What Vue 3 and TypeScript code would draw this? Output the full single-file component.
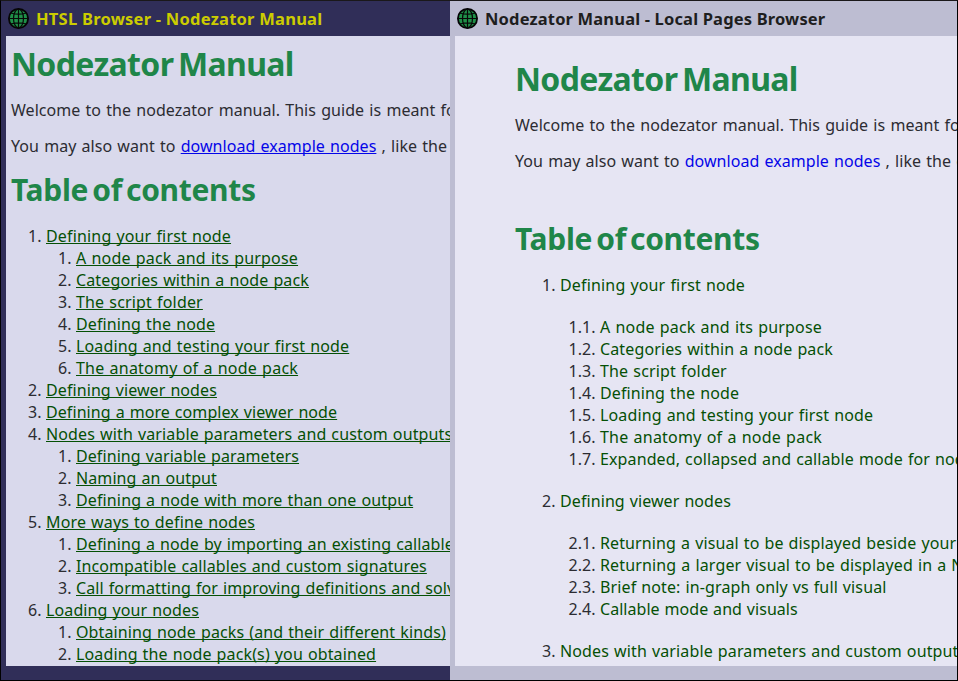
<script setup lang="ts">
interface Entry {
  num: string
  text: string
  /** Extra line width in pixels, spread over the letters. */
  adj?: number
  children?: Entry[]
}

const baseSpacing = 0.15

function tracking(e: Entry) {
  return { letterSpacing: `${(baseSpacing + (e.adj ?? 0) / e.text.length).toFixed(3)}px` }
}

const compactToc: Entry[] = [
  {
    num: '1.', text: 'Defining your first node', adj: 0.3, children: [
      { num: '1.', text: 'A node pack and its purpose', adj: 1.2 },
      { num: '2.', text: 'Categories within a node pack', adj: -0.5 },
      { num: '3.', text: 'The script folder', adj: 0.3 },
      { num: '4.', text: 'Defining the node', adj: -0.4 },
      { num: '5.', text: 'Loading and testing your first node', adj: -0.3 },
      { num: '6.', text: 'The anatomy of a node pack', adj: 2 },
    ],
  },
  { num: '2.', text: 'Defining viewer nodes', adj: -1.3 },
  { num: '3.', text: 'Defining a more complex viewer node', adj: -2.5 },
  {
    num: '4.', text: 'Nodes with variable parameters and custom outputs', adj: -0.8, children: [
      { num: '1.', text: 'Defining variable parameters', adj: -1.9 },
      { num: '2.', text: 'Naming an output', adj: -0.8 },
      { num: '3.', text: 'Defining a node with more than one output', adj: -0.8 },
    ],
  },
  {
    num: '5.', text: 'More ways to define nodes', adj: 0, children: [
      { num: '1.', text: 'Defining a node by importing an existing callable', adj: -1.8 },
      { num: '2.', text: 'Incompatible callables and custom signatures', adj: -2.6 },
      { num: '3.', text: 'Call formatting for improving definitions and solving', adj: -2.2 },
    ],
  },
  {
    num: '6.', text: 'Loading your nodes', adj: -0.6, children: [
      { num: '1.', text: 'Obtaining node packs (and their different kinds)', adj: -1.4 },
      { num: '2.', text: 'Loading the node pack(s) you obtained', adj: -0.8 },
    ],
  },
]

const fullToc: Entry[] = [
  {
    num: '1.', text: 'Defining your first node', adj: 0.3, children: [
      { num: '1.1.', text: 'A node pack and its purpose', adj: 1.2 },
      { num: '1.2.', text: 'Categories within a node pack', adj: -0.5 },
      { num: '1.3.', text: 'The script folder', adj: 0.3 },
      { num: '1.4.', text: 'Defining the node', adj: -0.4 },
      { num: '1.5.', text: 'Loading and testing your first node', adj: -0.3 },
      { num: '1.6.', text: 'The anatomy of a node pack', adj: 2 },
      { num: '1.7.', text: 'Expanded, collapsed and callable mode for nodes', adj: -1.5 },
    ],
  },
  {
    num: '2.', text: 'Defining viewer nodes', adj: -1.3, children: [
      { num: '2.1.', text: 'Returning a visual to be displayed beside your node', adj: -1.5 },
      { num: '2.2.', text: 'Returning a larger visual to be displayed in a Node', adj: -0.3 },
      { num: '2.3.', text: 'Brief note: in-graph only vs full visual', adj: -1.2 },
      { num: '2.4.', text: 'Callable mode and visuals', adj: -2.7 },
    ],
  },
  { num: '3.', text: 'Nodes with variable parameters and custom outputs', adj: -0.8 },
]

const windows = [
  { kind: 'dark', title: 'HTSL Browser - Nodezator Manual', toc: compactToc },
  { kind: 'light', title: 'Nodezator Manual - Local Pages Browser', toc: fullToc },
]
</script>

<template>
  <main class="screen">
    <section v-for="w in windows" :key="w.kind" class="window" :class="w.kind">
      <header class="titlebar">
        <svg class="globe" viewBox="0 0 21 21" width="21" height="21">
          <circle cx="10.5" cy="10.5" r="9.6" fill="#1f9048" stroke="#050505" stroke-width="1.8" />
          <g fill="none" stroke="#080808" stroke-width="1.2">
            <ellipse cx="10.5" cy="10.5" rx="5" ry="9.4" />
            <path d="M10.5 1v19M1 10.5h19M3 5Q10.5 7.4 18 5M3 16Q10.5 13.6 18 16" />
          </g>
        </svg>
        <span class="title">{{ w.title }}</span>
      </header>
      <article class="page">
        <h1>Nodezator Manual</h1>
        <p>Welcome to the nodezator manual. This guide is meant for</p>
        <p>You may also want to <a class="download">download example nodes</a> , like the ones</p>
        <h1 class="contents">Table of contents</h1>
        <ol class="toc">
          <li v-for="e in w.toc" :key="e.num" class="chapter">
            <div class="row"><span class="num">{{ e.num }}</span><a :style="tracking(e)">{{ e.text }}</a></div>
            <ol v-if="e.children" class="sub">
              <li v-for="c in e.children" :key="c.num" class="row">
                <span class="num">{{ c.num }}</span><a :style="tracking(c)">{{ c.text }}</a>
              </li>
            </ol>
          </li>
        </ol>
      </article>
    </section>
  </main>
</template>

<style>
body {
  margin: 0;
  overflow: hidden;
}
</style>

<style scoped>
.screen {
  box-sizing: border-box;
  width: 958px;
  height: 681px;
  display: flex;
  border: 1px solid #000;
  border-top-color: #1a181a;
  font-family: 'Noto Sans', sans-serif;
  font-size: 16px;
  line-height: 22px;
  letter-spacing: 0.15px;
  word-spacing: 0.7px;
  color: #2c2c32;
  overflow: hidden;
  white-space: nowrap;
}
.window {
  box-sizing: border-box;
  display: flex;
  flex-direction: column;
  overflow: hidden;
  padding: 0 0 14px 5px;
}
.dark {
  width: 449px;
  background: #302e58;
}
.light {
  width: 507px;
  background: #bdbdd2;
}
.titlebar {
  display: flex;
  align-items: center;
  height: 35px;
  flex: none;
  padding-left: 2px;
}
.globe {
  flex: none;
}
.title {
  margin-left: 7px;
  font-weight: 700;
  font-size: 16.5px;
  letter-spacing: 0.24px;
  word-spacing: 0;
}
.dark .title {
  color: #cccc00;
}
.light .title {
  color: #1e1e1e;
  letter-spacing: 0.16px;
}
.page {
  flex: 1;
  min-height: 0;
  overflow: hidden;
}
.dark .page {
  background: #d9d9ec;
  padding: 6px 0 0 5px;
}
.light .page {
  background: #e6e5f3;
  padding: 21px 0 0 60px;
}
h1 {
  margin: 0;
  font-size: 32px;
  line-height: 44px;
  letter-spacing: -0.65px;
  word-spacing: -3px;
  color: #1f8649;
}
p {
  margin: 14px 0 0;
  letter-spacing: 0.04px;
  word-spacing: 1px;
}
h1 + p {
  margin-top: 13px;
}
.contents {
  font-size: 30px;
  letter-spacing: -0.3px;
  word-spacing: -3.5px;
}
.dark .contents {
  margin-top: 11px;
}
.light .contents {
  margin-top: 45px;
}
ol {
  margin: 0;
  padding: 0;
  list-style: none;
}
.toc {
  margin-top: 13px;
}
.row {
  display: flex;
  height: 22px;
}
.num {
  flex: none;
  text-align: right;
  margin-right: 4.5px;
  letter-spacing: 0;
}
a {
  color: #055005;
  text-underline-offset: 1px;
  text-decoration-skip-ink: none;
  text-decoration-thickness: 1px;
}
.dark a {
  text-decoration-line: underline;
}
a.download {
  color: #0505e8;
}
.dark .num {
  width: 30.5px;
}
.dark .sub .num {
  width: 60.5px;
}
.light .num {
  width: 40.5px;
}
.light .sub .num {
  width: 80.5px;
}
.light .sub {
  padding: 20px 0;
}
</style>
